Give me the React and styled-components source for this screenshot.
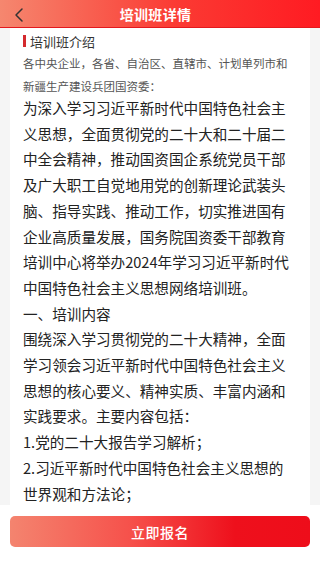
import React from "react";
import styled, { createGlobalStyle } from "styled-components";

const GlobalStyle = createGlobalStyle`
  html, body {
    margin: 0;
    padding: 0;
    background: #f5f5f5;
    font-family: "Noto Sans CJK SC", "Noto Sans", sans-serif;
  }
`;

const Page = styled.div`
  height: 100vh;
  display: flex;
  flex-direction: column;
  overflow: hidden;
`;

const Header = styled.header`
  height: 27px;
  flex-shrink: 0;
  display: flex;
  align-items: center;
  justify-content: center;
  position: relative;
  background: linear-gradient(90deg, #f5876f 0%, #fb3a33 55%, #ff1b22 100%);
  border-bottom: 1px solid #e3191d;
`;

const Back = styled.button`
  position: absolute;
  left: 12px;
  top: 7px;
  width: 14px;
  height: 16px;
  padding: 0;
  border: none;
  background: none;
  display: flex;
`;

const Title = styled.h1`
  margin: 0;
  padding-right: 9px;
  font-size: 14px;
  font-weight: 700;
  color: #fff;
  letter-spacing: 0.3px;
`;

const Content = styled.main`
  flex: 1;
  overflow: hidden;
  padding: 0 10px;
`;

const Card = styled.section`
  background: #fff;
  height: 100%;
  padding: 3px 13px 0 13px;
  box-sizing: border-box;
`;

const Body = styled.div`
  width: 272px;
`;

const SectionHead = styled.div`
  display: flex;
  align-items: center;
  height: 20px;
  font-size: 13px;
  color: #333;
  &::before {
    content: "";
    width: 3px;
    height: 12px;
    background: #d42a2e;
    margin-right: 4px;
  }
`;

const Note = styled.p`
  margin: 0 0 -3px 0;
  padding-top: 1px;
  font-size: 11.5px;
  line-height: 23px;
  color: #555;
`;

const Para = styled.p`
  margin: 0;
  font-size: 14.6px;
  line-height: 25.7px;
  color: #222;
`;

const Footer = styled.footer`
  height: 64px;
  flex-shrink: 0;
  background: #fff;
  padding: 11px 10px 0;
  box-sizing: border-box;
`;

const SignUp = styled.button`
  width: 100%;
  height: 31px;
  border: none;
  border-radius: 5px;
  background: linear-gradient(90deg, #f4846f 0%, #f6514b 40%, #ee101c 75%, #ee0d1a 100%);
  color: #fff;
  font-family: inherit;
  font-size: 14px;
  font-weight: 500;
  letter-spacing: 0.5px;
`;

export default function App() {
  return (
    <Page>
      <GlobalStyle />
      <Header>
        <Back aria-label="返回">
          <svg width="14" height="16" viewBox="0 0 14 16">
            <path d="M10 2 L4 8 L10 14" fill="none" stroke="#333" strokeWidth="1.5" strokeLinecap="round" strokeLinejoin="round" />
          </svg>
        </Back>
        <Title>培训班详情</Title>
      </Header>
      <Content>
        <Card>
          <SectionHead>培训班介绍</SectionHead>
          <Note>各中央企业，各省、自治区、直辖市、计划单列市和新疆生产建设兵团国资委：</Note>
          <Body>
            <Para>
              为深入学习习近平新时代中国特色社会主义思想，全面贯彻党的二十大和二十届二中全会精神，推动国资国企系统党员干部及广大职工自觉地用党的创新理论武装头脑、指导实践、推动工作，切实推进国有企业高质量发展，国务院国资委干部教育培训中心将举办2024年学习习近平新时代中国特色社会主义思想网络培训班。
            </Para>
            <Para>一、培训内容</Para>
            <Para>
              围绕深入学习贯彻党的二十大精神，全面学习领会习近平新时代中国特色社会主义思想的核心要义、精神实质、丰富内涵和实践要求。主要内容包括：
            </Para>
            <Para>1.党的二十大报告学习解析；</Para>
            <Para>2.习近平新时代中国特色社会主义思想的世界观和方法论；</Para>
          </Body>
        </Card>
      </Content>
      <Footer>
        <SignUp>立即报名</SignUp>
      </Footer>
    </Page>
  );
}
